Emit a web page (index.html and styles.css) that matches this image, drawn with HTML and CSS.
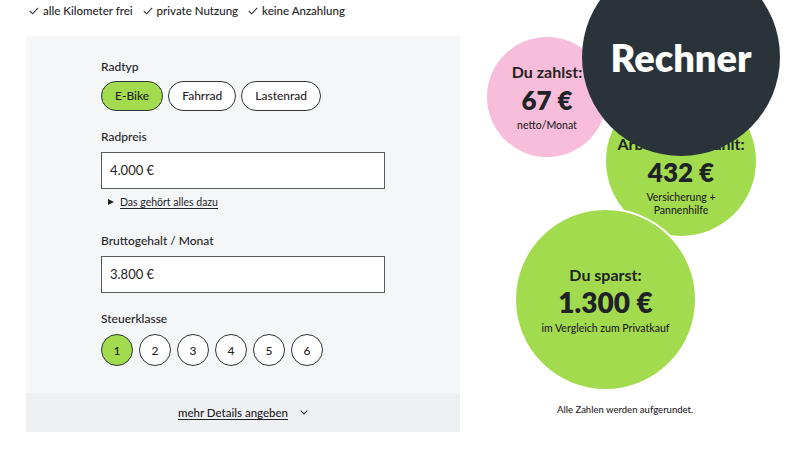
FILE: index.html
```html
<!DOCTYPE html>
<html lang="de">
<head>
<meta charset="utf-8">
<title>Rechner</title>
<link rel="stylesheet" href="styles.css">
</head>
<body>
<div class="page">
  <div class="left">
    <ul class="usps">
      <li><svg class="check" viewBox="0 0 10 8"><polyline points="0.8,4 3.6,6.8 9.2,0.8"/></svg>alle Kilometer frei</li>
      <li><svg class="check" viewBox="0 0 10 8"><polyline points="0.8,4 3.6,6.8 9.2,0.8"/></svg>private Nutzung</li>
      <li><svg class="check" viewBox="0 0 10 8"><polyline points="0.8,4 3.6,6.8 9.2,0.8"/></svg>keine Anzahlung</li>
    </ul>
    <section class="panel">
      <div class="form">
        <div class="group">
          <div class="label">Radtyp</div>
          <div class="pills">
            <span class="pill active">E-Bike</span>
            <span class="pill">Fahrrad</span>
            <span class="pill">Lastenrad</span>
          </div>
        </div>
        <div class="group">
          <div class="label">Radpreis</div>
          <div class="input">4.000 €</div>
          <div class="summary"><span class="tri"></span><span class="link">Das gehört alles dazu</span></div>
        </div>
        <div class="group">
          <div class="label">Bruttogehalt / Monat</div>
          <div class="input">3.800 €</div>
        </div>
        <div class="group">
          <div class="label">Steuerklasse</div>
          <div class="classes">
            <span class="cls active">1</span>
            <span class="cls">2</span>
            <span class="cls">3</span>
            <span class="cls">4</span>
            <span class="cls">5</span>
            <span class="cls">6</span>
          </div>
        </div>
      </div>
      <div class="more">
        <span class="link">mehr Details angeben</span>
        <svg class="chev" viewBox="0 0 8 5"><polyline points="0.7,0.7 4,4 7.3,0.7"/></svg>
      </div>
    </section>
  </div>
  <div class="bubbles">
    <div class="bubble pink">
      <div class="b-title">Du zahlst:</div>
      <div class="b-value">67 €</div>
      <div class="b-sub">netto/Monat</div>
    </div>
    <div class="bubble green mid">
      <div class="b-title">Arbeitgeber zahlt:</div>
      <div class="b-value">432 €</div>
      <div class="b-sub">Versicherung +<br>Pannenhilfe</div>
    </div>
    <div class="bubble green big">
      <div class="b-title">Du sparst:</div>
      <div class="b-value large">1.300 €</div>
      <div class="b-sub">im Vergleich zum Privatkauf</div>
    </div>
    <div class="bubble dark">Rechner</div>
    <p class="note">Alle Zahlen werden aufgerundet.</p>
  </div>
</div>
</body>
</html>
```

FILE: styles.css
```css
* { box-sizing: border-box; }
html, body { margin: 0; padding: 0; }
body {
  width: 800px;
  height: 450px;
  overflow: hidden;
  background: #ffffff;
  font-family: "Lato", "Open Sans", sans-serif;
  color: #1f2326;
}
.page {
  display: flex;
  height: 450px;
}
.left {
  width: 460px;
  padding-left: 26px;
  display: flex;
  flex-direction: column;
}
.usps {
  list-style: none;
  margin: 0;
  padding: 3px 0 0 3px;
  height: 36px;
  display: flex;
  align-items: flex-start;
  gap: 10px;
  font-size: 11.5px;
  font-weight: 500;
  line-height: 16px;
}
.usps li {
  display: flex;
  align-items: center;
  gap: 4px;
}
.check {
  width: 10px;
  height: 8px;
  fill: none;
  stroke: #333;
  stroke-width: 1.1;
}
.panel {
  background: #f4f6f7;
  height: 396px;
  display: flex;
  flex-direction: column;
}
.form {
  flex: 1;
  padding: 23px 0 0 75px;
  display: flex;
  flex-direction: column;
  gap: 18px;
}
.label {
  font-size: 12px;
  font-weight: 500;
  line-height: 16px;
  margin-bottom: 7px;
}
.group:first-child .label { margin-bottom: 6px; }
.pills {
  display: flex;
  gap: 5px;
}
.pill {
  height: 30px;
  border: 1.5px solid #2f3437;
  border-radius: 15px;
  padding: 0 13px;
  background: #fff;
  font-size: 12px;
  font-weight: 500;
  line-height: 27px;
}
.pill.active, .cls.active {
  background: #a2dc4e;
}
.input {
  width: 284px;
  height: 37px;
  border: 1.5px solid #555a5e;
  background: #fff;
  padding-left: 8px;
  font-size: 13px;
  line-height: 34px;
}
.summary {
  margin-top: 5px;
  padding: 0 0 5px 7px;
  display: flex;
  align-items: center;
  gap: 6px;
  font-size: 10.5px;
  line-height: 16px;
}
.tri {
  width: 0;
  height: 0;
  border-left: 6px solid #222;
  border-top: 3.5px solid transparent;
  border-bottom: 3.5px solid transparent;
}
.link {
  text-decoration: underline;
  text-underline-offset: 2px;
}
.classes {
  display: flex;
  gap: 6px;
}
.cls {
  width: 32px;
  height: 32px;
  border: 1.5px solid #2f3437;
  border-radius: 50%;
  background: #fff;
  display: flex;
  align-items: center;
  justify-content: center;
  font-size: 12px;
  font-weight: 500;
}
.more {
  height: 39px;
  background: #eef0f2;
  display: flex;
  align-items: center;
  justify-content: center;
  gap: 12px;
  font-size: 11.5px;
  font-weight: 500;
}
.chev {
  width: 8px;
  height: 5px;
  fill: none;
  stroke: #333;
  stroke-width: 1.1;
}
.bubbles {
  position: relative;
  flex: 1;
  height: 450px;
}
.bubble {
  position: absolute;
  border-radius: 50%;
  display: flex;
  flex-direction: column;
  align-items: center;
  justify-content: center;
  text-align: center;
}
.pink {
  left: 27px;
  top: 37px;
  width: 120px;
  height: 120px;
  background: #f8bddb;
}
.green { background: #a2dc4e; }
.mid {
  left: 146px;
  top: 86px;
  width: 150px;
  height: 150px;
  padding-top: 28px;
}
.big {
  left: 54px;
  top: 208px;
  width: 183px;
  height: 183px;
  border: 2px solid #fff;
}
.dark {
  left: 122px;
  top: -42px;
  width: 198px;
  height: 198px;
  background: #2a333a;
  color: #fff;
  font-size: 38px;
  font-weight: 800;
}
.b-title {
  font-size: 16px;
  font-weight: 700;
  line-height: 20px;
  white-space: nowrap;
}
.b-value {
  font-size: 26px;
  font-weight: 800;
  line-height: 30px;
  margin-top: 3px;
}
.b-value.large {
  font-size: 28px;
  line-height: 32px;
  margin-top: 1px;
}
.b-sub {
  font-size: 10.5px;
  font-weight: 500;
  line-height: 13px;
  margin-top: 4px;
}
.note {
  position: absolute;
  left: 97px;
  top: 403px;
  width: 128px;
  margin: 0;
  font-size: 9.5px;
  font-weight: 500;
  line-height: 14px;
  text-align: center;
  white-space: nowrap;
}
```
